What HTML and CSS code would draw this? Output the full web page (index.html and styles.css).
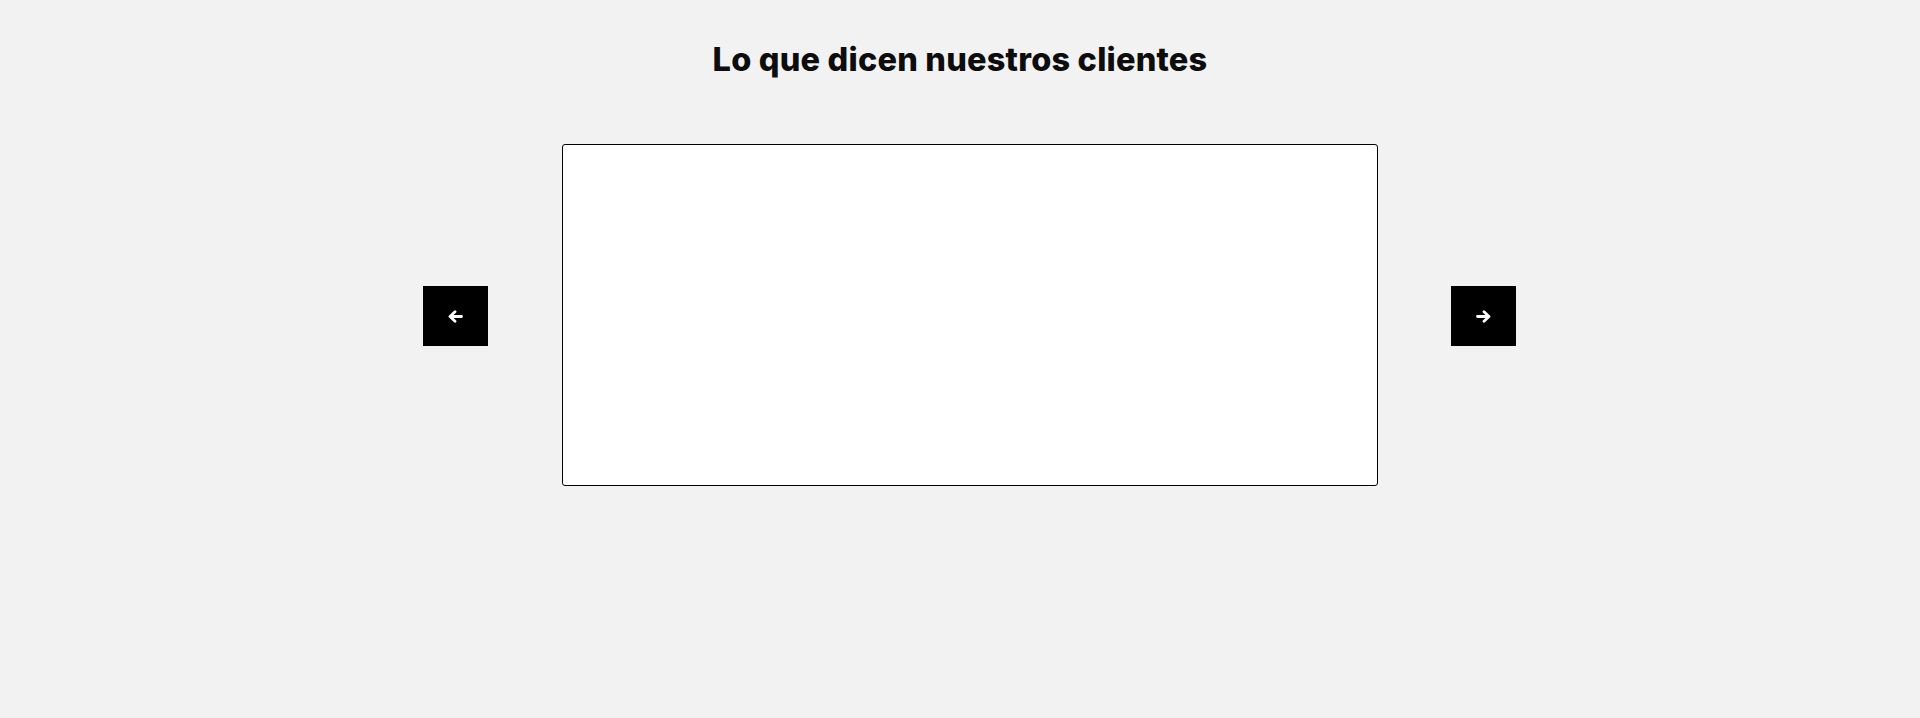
FILE: index.html
```html
<!DOCTYPE html>
<html lang="es">
<head>
<meta charset="utf-8">
<title>Testimonios</title>
<link rel="stylesheet" href="styles.css">
</head>
<body>
<section class="testimonials">
  <h2 class="title">Lo que dicen nuestros clientes</h2>
  <div class="carousel">
    <button class="nav-btn nav-prev" aria-label="Anterior">
      <svg width="15" height="13" viewBox="0 0 15 13" aria-hidden="true"><path d="M13.5 6.5H2M7 1.8L2 6.5l5 4.7" fill="none" stroke="#fff" stroke-width="2.8" stroke-linecap="round" stroke-linejoin="round"/></svg>
    </button>
    <div class="card"></div>
    <button class="nav-btn nav-next" aria-label="Siguiente">
      <svg width="15" height="13" viewBox="0 0 15 13" aria-hidden="true"><path d="M1.5 6.5H13M8 1.8l5 4.7-5 4.7" fill="none" stroke="#fff" stroke-width="2.8" stroke-linecap="round" stroke-linejoin="round"/></svg>
    </button>
  </div>
</section>
</body>
</html>
```

FILE: styles.css
```css
html, body {
  margin: 0;
  padding: 0;
  background: #f2f2f2;
}
body {
  height: 718px;
  overflow: hidden;
  font-family: Inter, "Noto Sans", sans-serif;
}
.testimonials {
  display: flex;
  flex-direction: column;
  align-items: center;
}
.title {
  margin: 0;
  padding: 40px 0 0 0;
  font-size: 32.5px;
  line-height: 40px;
  font-weight: 800;
  color: #0d0d0d;
  letter-spacing: 0.2px;
}
.carousel {
  margin-top: 64px;
  padding-left: 19px;
  display: flex;
  align-items: center;
}
.nav-btn {
  width: 65px;
  height: 60px;
  margin-top: 2px;
  border: 0;
  padding: 0;
  background: #000;
  display: flex;
  align-items: center;
  justify-content: center;
  cursor: pointer;
}
.nav-prev {
  margin-right: 74px;
}
.nav-next {
  margin-left: 73px;
}
.card {
  width: 814px;
  height: 340px;
  background: #fff;
  border: 1px solid #000;
  border-radius: 3px;
}
```
